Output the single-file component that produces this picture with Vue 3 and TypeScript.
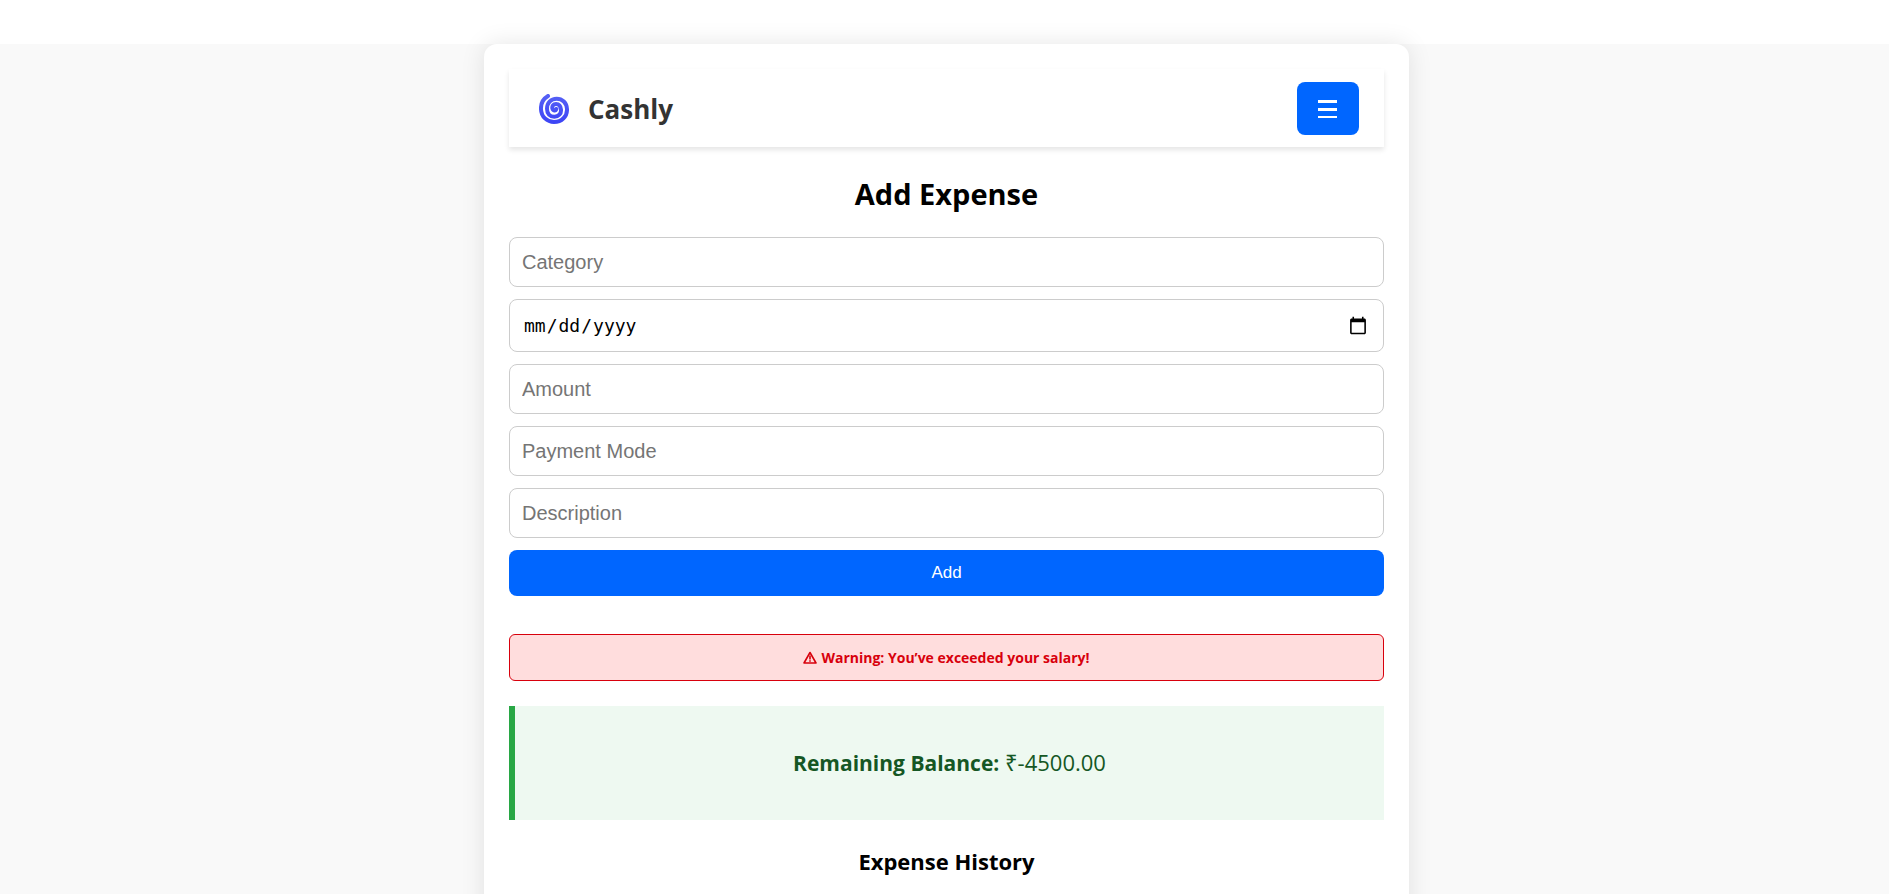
<script setup lang="ts">
import { reactive } from 'vue'

interface ExpenseForm {
  category: string
  date: string
  amount: string
  paymentMode: string
  description: string
}

const form = reactive<ExpenseForm>({
  category: '',
  date: '',
  amount: '',
  paymentMode: '',
  description: '',
})

const balance = -4500
</script>

<template>
  <div class="page">
    <main class="card">
      <header class="topbar">
        <div class="brand">
          <svg class="logo" viewBox="0 0 90 90" aria-hidden="true">
            <defs>
              <linearGradient id="swirl" x1="0" y1="0" x2="0" y2="1">
                <stop offset="0" stop-color="#5560f5" />
                <stop offset="1" stop-color="#3d45f5" />
              </linearGradient>
            </defs>
            <path
              d="M27 6C12 15 5 30 6 46C7 68 24 84 45 84C68 84 85 67 84 45C83 26 70 14 53 14C35 14 24 27 24 44C24 59 33 68 46 68C59 68 67 59 66 47C65 36 59 30 51 30C43 30 39 36 40 43C42 51 50 52 52 45"
              fill="none"
              stroke="url(#swirl)"
              stroke-width="12"
              stroke-linecap="round"
            />
          </svg>
          <span class="name">Cashly</span>
        </div>
        <button class="menu" type="button" aria-label="Menu">
          <svg viewBox="0 0 20 20" aria-hidden="true">
            <path d="M0 1h19v3H0zM0 9h19v3H0zM0 17h19v2H0z" fill="#fff" />
          </svg>
        </button>
      </header>

      <h2>Add Expense</h2>
      <form @submit.prevent>
        <input v-model="form.category" type="text" placeholder="Category" aria-label="Category" />
        <input v-model="form.date" class="date" type="date" aria-label="Date" />
        <input v-model="form.amount" type="number" placeholder="Amount" aria-label="Amount" />
        <input v-model="form.paymentMode" type="text" placeholder="Payment Mode" aria-label="Payment Mode" />
        <input v-model="form.description" type="text" placeholder="Description" aria-label="Description" />
        <button class="add" type="submit">Add</button>
      </form>

      <div class="warning" role="alert">
        <svg viewBox="0 0 14 13" aria-hidden="true">
          <path d="M7 1.5L13 12H1z" fill="none" stroke="currentColor" stroke-width="1.6" stroke-linejoin="round" />
          <path d="M7 4.5v4M7 9.3v1.4" stroke="currentColor" stroke-width="1.6" />
        </svg>
        <span>Warning: You’ve exceeded your salary!</span>
      </div>

      <div class="balance">
        <p><strong>Remaining Balance:</strong> ₹{{ balance.toFixed(2) }}</p>
      </div>

      <h3>Expense History</h3>
    </main>
  </div>
</template>

<style>
html {
  overflow: hidden;
}
</style>

<style scoped>
.page {
  margin-top: 44px;
  padding-left: 4px;
  min-height: calc(100vh - 44px);
  background: #f9f9f9;
  font-family: "Segoe UI", "Open Sans", "Noto Sans", sans-serif;
  color: #000;
}
.card {
  box-sizing: border-box;
  max-width: 925px;
  min-height: calc(100vh - 20px);
  margin: 0 auto;
  padding: 25px;
  background: #fff;
  border-radius: 13px;
  box-shadow: 0 0 25px rgba(0, 0, 0, 0.1);
}
.topbar {
  display: flex;
  align-items: center;
  justify-content: space-between;
  padding: 13px 25px 12px 30px;
  background: #fff;
  box-shadow: 0 3px 5px rgba(0, 0, 0, 0.1);
}
.brand {
  display: flex;
  align-items: center;
  gap: 19px;
}
.logo {
  width: 30px;
  height: 30px;
}
.name {
  font-size: 26px;
  line-height: 38px;
  font-weight: 700;
  color: #333;
}
button {
  border: 0;
  border-radius: 8px;
  background: #0066ff;
  color: #fff;
  font-family: "Liberation Sans", Arial, sans-serif;
  cursor: pointer;
}
.menu {
  display: flex;
  align-items: center;
  justify-content: center;
  width: 62px;
  height: 53px;
}
.menu svg {
  width: 20px;
  height: 20px;
}
h2 {
  margin: 26px 0 23px;
  font-size: 29px;
  line-height: 41px;
  text-align: center;
}
form {
  display: grid;
  gap: 12px;
}
input {
  box-sizing: border-box;
  width: 100%;
  height: 50px;
  padding: 12px;
  border: 1px solid #ccc;
  border-radius: 8px;
  background: #fff;
  color: #000;
  font-family: "Liberation Sans", Arial, sans-serif;
  font-size: 20px;
  appearance: textfield;
}
input::placeholder {
  color: #757575;
}
.date {
  height: 53px;
  padding: 12px 13px;
  font-family: "DejaVu Sans Mono", monospace;
  font-size: 18px;
}
.date::-webkit-calendar-picker-indicator {
  width: 20px;
  height: 20px;
}
.add {
  height: 46px;
  font-size: 17px;
}
.warning {
  display: flex;
  align-items: center;
  justify-content: center;
  gap: 4px;
  margin: 38px 0 25px;
  padding: 12px;
  border: 1px solid #d8000c;
  border-radius: 6px;
  background: #ffdddd;
  color: #d8000c;
  font-size: 14px;
  line-height: 21px;
  font-weight: 700;
}
.warning svg {
  width: 14px;
  height: 13px;
}
.balance {
  padding: 42px 25px;
  border-left: 6px solid #28a745;
  background: #eef9f1;
  color: #155724;
  font-size: 22px;
  line-height: 29px;
  text-align: center;
}
.balance p {
  margin: 0;
}
.balance strong {
  font-size: 21px;
}
h3 {
  margin: 25px 0;
  font-size: 22px;
  line-height: 32px;
  text-align: center;
}
</style>
